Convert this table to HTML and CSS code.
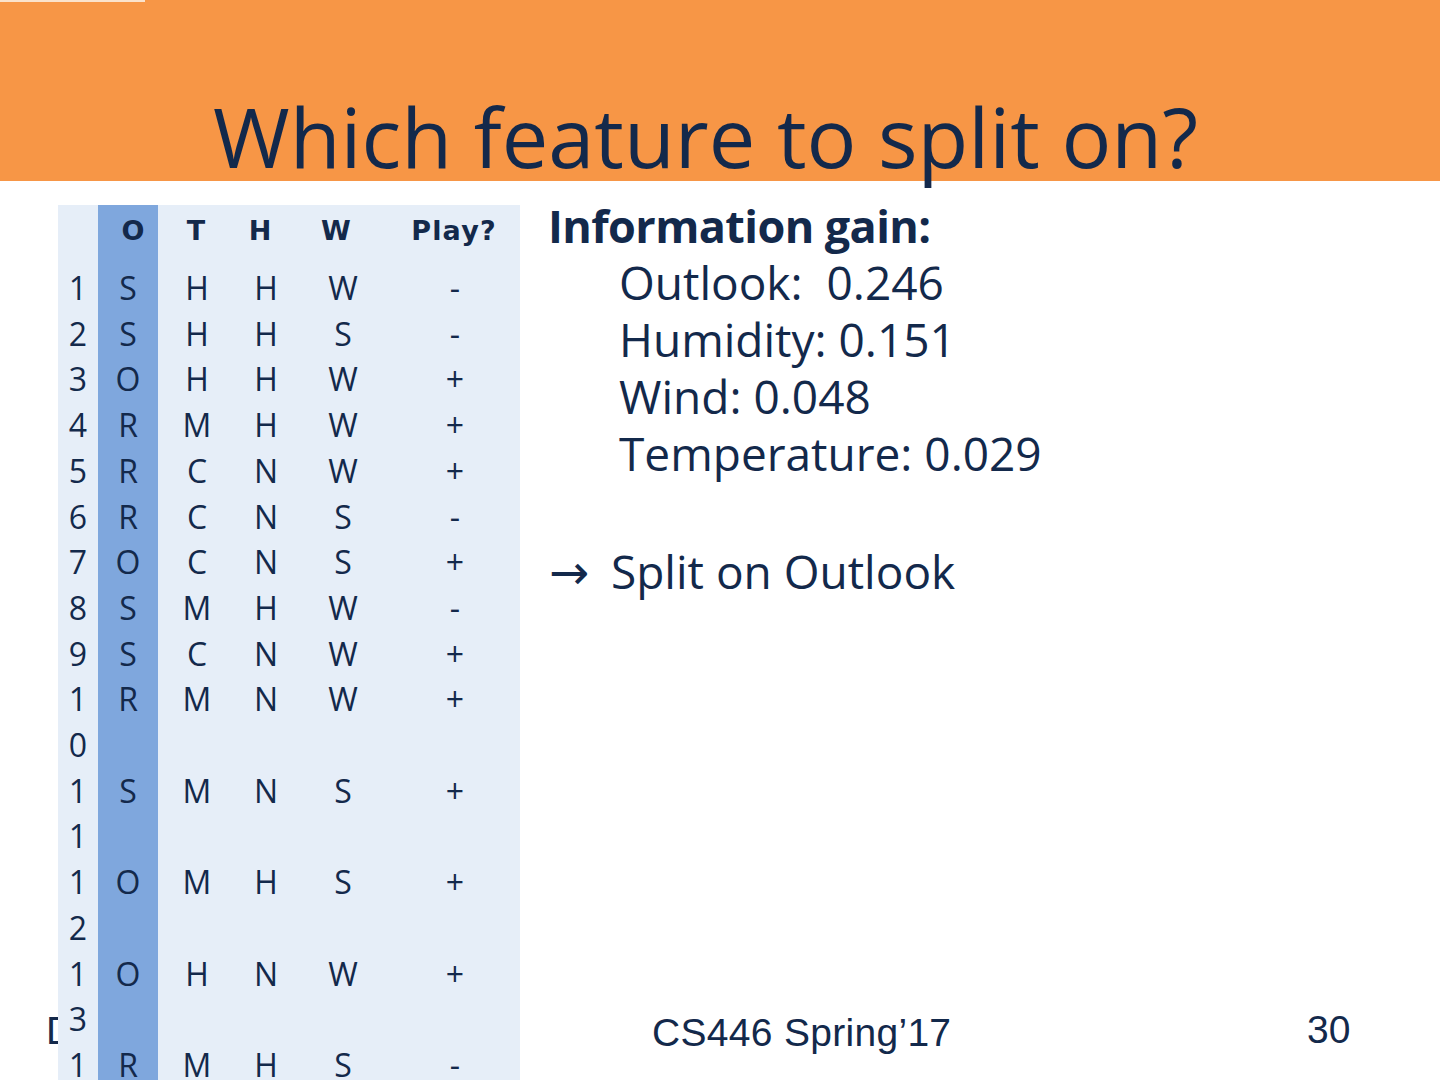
FILE: index.html
```html
<!DOCTYPE html>
<html lang="en">
<head>
<meta charset="utf-8">
<title>Which feature to split on?</title>
<link rel="stylesheet" href="styles.css">
</head>
<body>
<div class="slide">
  <div class="top-strip"></div>
  <header class="band">
    <h1 class="title">Which feature to split on?</h1>
  </header>
  <main class="content">
    <table class="data">
      <colgroup>
        <col class="c-num"><col class="c-o"><col class="c-t"><col class="c-h"><col class="c-w"><col class="c-p">
      </colgroup>
      <thead>
        <tr><th></th><th class="hl h-o">O</th><th class="h-t">T</th><th class="h-h">H</th><th class="h-w">W</th><th class="h-p">Play?</th></tr>
      </thead>
      <tbody>
        <tr><td class="num">1</td><td class="hl">S</td><td>H</td><td>H</td><td>W</td><td>-</td></tr>
        <tr><td class="num">2</td><td class="hl">S</td><td>H</td><td>H</td><td>S</td><td>-</td></tr>
        <tr><td class="num">3</td><td class="hl">O</td><td>H</td><td>H</td><td>W</td><td>+</td></tr>
        <tr><td class="num">4</td><td class="hl">R</td><td>M</td><td>H</td><td>W</td><td>+</td></tr>
        <tr><td class="num">5</td><td class="hl">R</td><td>C</td><td>N</td><td>W</td><td>+</td></tr>
        <tr><td class="num">6</td><td class="hl">R</td><td>C</td><td>N</td><td>S</td><td>-</td></tr>
        <tr><td class="num">7</td><td class="hl">O</td><td>C</td><td>N</td><td>S</td><td>+</td></tr>
        <tr><td class="num">8</td><td class="hl">S</td><td>M</td><td>H</td><td>W</td><td>-</td></tr>
        <tr><td class="num">9</td><td class="hl">S</td><td>C</td><td>N</td><td>W</td><td>+</td></tr>
        <tr><td class="num">10</td><td class="hl">R</td><td>M</td><td>N</td><td>W</td><td>+</td></tr>
        <tr><td class="num">11</td><td class="hl">S</td><td>M</td><td>N</td><td>S</td><td>+</td></tr>
        <tr><td class="num">12</td><td class="hl">O</td><td>M</td><td>H</td><td>S</td><td>+</td></tr>
        <tr><td class="num">13</td><td class="hl">O</td><td>H</td><td>N</td><td>W</td><td>+</td></tr>
        <tr><td class="num">14</td><td class="hl">R</td><td>M</td><td>H</td><td>S</td><td>-</td></tr>
      </tbody>
    </table>
    <section class="gain">
      <p class="gain-head">Information gain:</p>
      <p class="gain-item">Outlook:&nbsp; 0.246</p>
      <p class="gain-item">Humidity: 0.151</p>
      <p class="gain-item">Wind: 0.048</p>
      <p class="gain-item">Temperature: 0.029</p>
      <p class="gain-result"><span class="arrow">→</span> Split on Outlook</p>
    </section>
  </main>
  <footer class="footer">
    <span class="foot-left">Dan Roth</span>
    <span class="foot-mid">CS446 Spring’17</span>
    <span class="foot-page">30</span>
  </footer>
</div>
</body>
</html>
```

FILE: styles.css
```css
html, body {
  margin: 0;
  padding: 0;
  background: #ffffff;
}

body {
  width: 1440px;
  height: 1080px;
  overflow: hidden;
}

.slide {
  position: relative;
  width: 1440px;
  height: 1080px;
  overflow: hidden;
  background: #ffffff;
  color: #13294b;
  font-family: "Open Sans", "Liberation Sans", sans-serif;
}

.top-strip {
  position: absolute;
  left: 0;
  top: 0;
  width: 145px;
  height: 2px;
  background: #fbe3cc;
  z-index: 2;
}

.band {
  height: 181px;
  background: #f79646;
  display: flex;
  align-items: flex-end;
  box-sizing: border-box;
  padding: 0 0 4px 213px;
}

.title {
  margin: 0;
  font-weight: 400;
  font-size: 83px;
  line-height: 83px;
  color: #13294b;
  white-space: nowrap;
  position: relative;
  z-index: 1;
}

.content {
  display: flex;
  align-items: flex-start;
  gap: 28px;
  padding: 24px 0 0 58px;
}

.data {
  position: relative;
  z-index: 3;
  width: 462px;
  table-layout: fixed;
  border-collapse: collapse;
  border-spacing: 0;
  background: #e6eef8;
  color: #13294b;
  flex: none;
}

.c-num { width: 40px; }
.c-o { width: 60px; }
.c-t { width: 78px; }
.c-h { width: 60px; }
.c-w { width: 94px; }
.c-p { width: 130px; }

.data th {
  height: 60px;
  padding: 0 0 8px;
  box-sizing: border-box;
  vertical-align: top;
  font-family: "DejaVu Sans", "Open Sans", sans-serif;
  font-size: 27px;
  line-height: 52px;
  font-weight: 700;
  text-align: center;
}

.data th.h-o { padding-left: 10px; }
.data th.h-t { padding-right: 2px; }
.data th.h-h { padding-right: 12px; }
.data th.h-w { padding-right: 14px; }
.data th.h-p { padding-right: 2px; letter-spacing: 1.2px; }

.data td {
  padding: 0;
  font-size: 32px;
  line-height: 45.7px;
  font-weight: 400;
  text-align: center;
  vertical-align: top;
}

.data td.num {
  word-break: break-all;
  padding: 0 4px;
}

.data .hl {
  background: #7fa7dd;
}

.gain {
  margin-top: -8px;
}

.gain p {
  margin: 0;
  font-size: 46px;
  line-height: 57px;
  white-space: nowrap;
}

.gain-head {
  font-weight: 700;
  font-size: 45px !important;
  letter-spacing: -0.6px;
}

.gain-item {
  padding-left: 71px;
}

.gain-result {
  margin-top: 61px !important;
}

.arrow {
  font-family: "DejaVu Sans", sans-serif;
  font-size: 48px;
  display: inline-block;
  width: 50px;
  margin-left: 1px;
}

.footer {
  position: absolute;
  left: 0;
  right: 0;
  top: 1006px;
  height: 50px;
  font-family: "Liberation Sans", Arial, sans-serif;
  font-size: 39px;
  line-height: 50px;
  color: #13294b;
  z-index: 1;
}

.foot-left {
  position: absolute;
  left: 46px;
  top: 0;
}

.foot-mid {
  position: absolute;
  left: 652px;
  top: 2px;
  letter-spacing: 0.3px;
}

.foot-page {
  position: absolute;
  left: 1307px;
  top: -1px;
}
```
